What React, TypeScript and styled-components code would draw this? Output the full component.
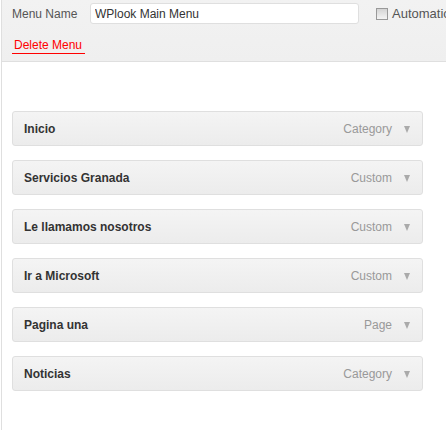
import React, {FC} from 'react';
import styled, {createGlobalStyle} from 'styled-components';

/*
 * Data.
 */

interface MenuItemData {
  title: string;
  kind: string;
}

const menuItems: MenuItemData[] = [
  {title: 'Inicio', kind: 'Category'},
  {title: 'Servicios Granada', kind: 'Custom'},
  {title: 'Le llamamos nosotros', kind: 'Custom'},
  {title: 'Ir a Microsoft', kind: 'Custom'},
  {title: 'Pagina una', kind: 'Page'},
  {title: 'Noticias', kind: 'Category'},
];

/*
 * Style.
 */

const GlobalStyle = createGlobalStyle`
  html, body {
    margin: 0;
    padding: 0;
    background: #fff;
    font-family: "Liberation Sans", Arial, sans-serif;
    font-size: 12px;
    overflow: hidden;
  }
`;

const StyledEditorDiv = styled.div`
  margin-left: 1px;
  border-left: 1px solid #dfdfdf;
  height: 430px;
  width: 460px;
  display: flex;
  flex-direction: column;
`;

const StyledHeaderDiv = styled.div`
  height: 62px;
  box-sizing: border-box;
  background: linear-gradient(#f2f2f2, #efefef);
  border-bottom: 1px solid #dfdfdf;
  padding: 3px 0 0 10px;
  display: flex;
  flex-direction: column;
`;

const StyledNameRowDiv = styled.div`
  display: flex;
  align-items: center;
  height: 21px;
`;

const StyledLabel = styled.label`
  color: #555;
  width: 78px;
  flex: none;
`;

const StyledNameInput = styled.input`
  box-sizing: border-box;
  width: 269px;
  height: 21px;
  border: 1px solid #dfdfdf;
  border-radius: 3px;
  background: #fff;
  padding: 0 4px;
  font-family: "Liberation Sans", Arial, sans-serif;
  font-size: 12px;
  color: #333;
  outline: none;
`;

const StyledAutoLabel = styled.label`
  display: flex;
  align-items: center;
  margin-left: 17px;
  color: #555;
  font-size: 13px;
  white-space: nowrap;
  gap: 4px;
`;

const StyledCheckbox = styled.span`
  width: 12px;
  height: 12px;
  box-sizing: border-box;
  border: 1px solid #999;
  background: linear-gradient(#d4d4d4, #f4f4f4);
`;

const StyledDeleteLink = styled.a`
  align-self: flex-start;
  margin-top: 14px;
  padding: 0 3px 1px 2px;
  color: #f00;
  border-bottom: 1px solid #f00;
  text-decoration: none;
  line-height: 14px;
`;

const StyledListDiv = styled.div`
  display: flex;
  flex-direction: column;
  gap: 14px;
  padding: 49px 0 0 10px;
  width: 411px;
`;

const StyledItemDiv = styled.div`
  box-sizing: border-box;
  height: 35px;
  border: 1px solid #dfdfdf;
  border-radius: 3px;
  background: linear-gradient(#f4f4f4, #ececec);
  display: flex;
  align-items: center;
  padding: 0 12px 0 11px;
`;

const StyledItemTitle = styled.span`
  flex: 1;
  font-weight: bold;
  color: #333;
`;

const StyledItemKind = styled.span`
  color: #999;
  font-size: 12px;
`;

const StyledArrow = styled.span`
  margin-left: 12px;
  width: 0;
  height: 0;
  border-left: 3.5px solid transparent;
  border-right: 3.5px solid transparent;
  border-top: 7px solid #aaa;
  margin-top: 1px;
`;

/*
 * Component.
 */

const MenuItem: FC<MenuItemData> = ({title, kind}) => (
  <StyledItemDiv>
    <StyledItemTitle>{title}</StyledItemTitle>
    <StyledItemKind>{kind}</StyledItemKind>
    <StyledArrow />
  </StyledItemDiv>
);

export default function App() {
  return (
    <>
      <GlobalStyle />
      <StyledEditorDiv>
        <StyledHeaderDiv>
          <StyledNameRowDiv>
            <StyledLabel>Menu Name</StyledLabel>
            <StyledNameInput defaultValue="WPlook Main Menu" />
            <StyledAutoLabel>
              <StyledCheckbox />
              Automatic
            </StyledAutoLabel>
          </StyledNameRowDiv>
          <StyledDeleteLink href="#">Delete Menu</StyledDeleteLink>
        </StyledHeaderDiv>
        <StyledListDiv>
          {menuItems.map(item => (
            <MenuItem key={item.title} {...item} />
          ))}
        </StyledListDiv>
      </StyledEditorDiv>
    </>
  );
}
